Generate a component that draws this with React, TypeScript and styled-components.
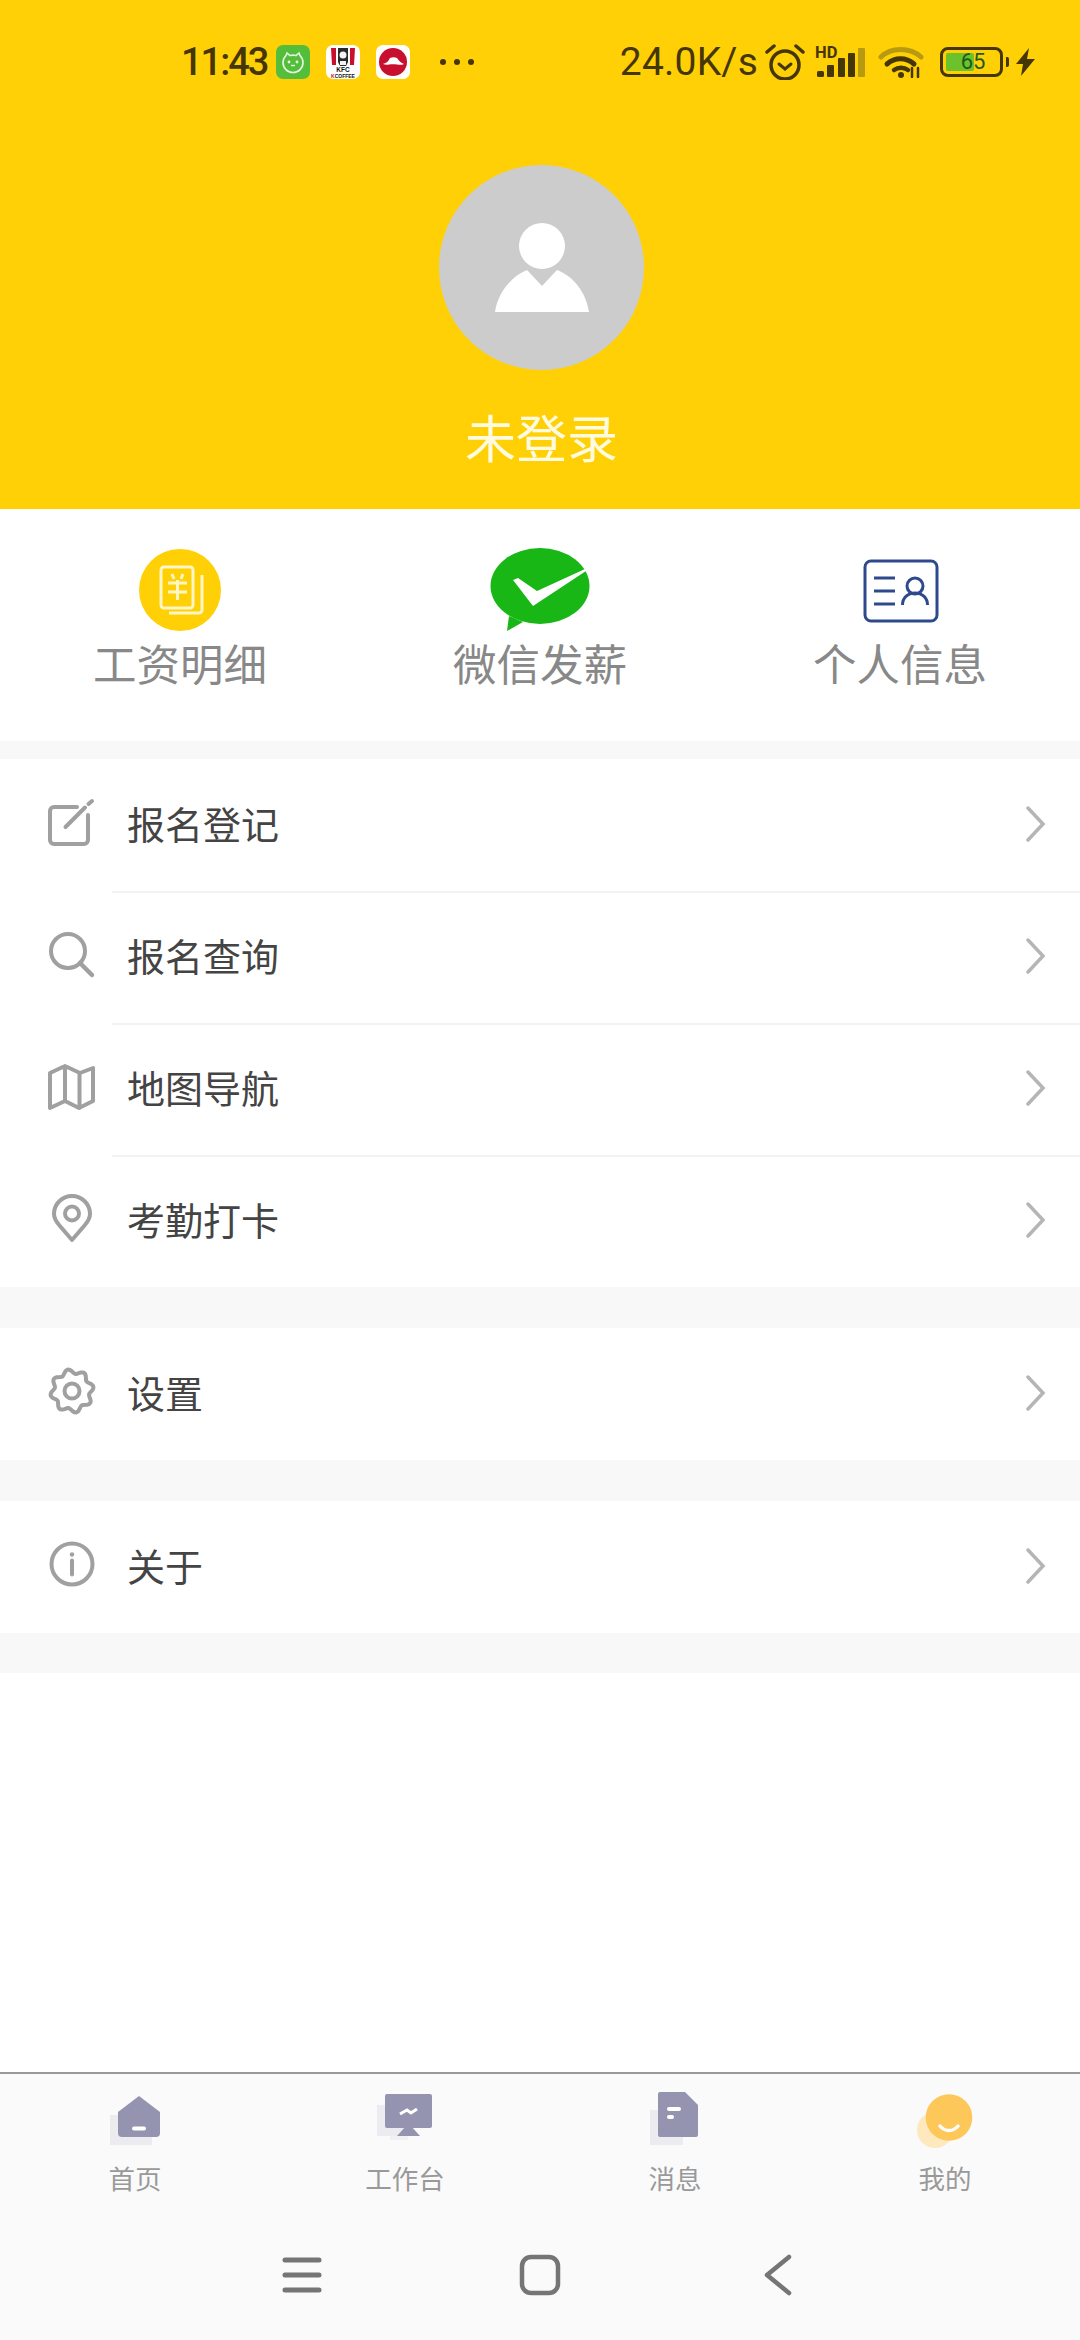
import { Fragment } from 'react'
import { createGlobalStyle, styled } from 'styled-components'

const GlobalStyle = createGlobalStyle`
  html, body {
    margin: 0;
    padding: 0;
    background: #fff;
    font-family: "Noto Sans CJK SC", "Noto Sans", sans-serif;
  }
  * {
    box-sizing: border-box;
  }
`

const gearPath = (() => {
  const points: string[] = []
  for (let i = 0; i < 96; i++) {
    const a = (i / 96) * Math.PI * 2
    const r = 19.6 + 2.2 * Math.cos(a * 8 + Math.PI / 2)
    points.push(`${(24 + r * Math.cos(a)).toFixed(2)} ${(22 + r * Math.sin(a)).toFixed(2)}`)
  }
  return `M${points.join('L')}Z`
})()

const menuGroups = [
  [
    { label: '报名登记', icon: 'edit' },
    { label: '报名查询', icon: 'search' },
    { label: '地图导航', icon: 'map' },
    { label: '考勤打卡', icon: 'pin' },
  ],
  [{ label: '设置', icon: 'gear' }],
  [{ label: '关于', icon: 'info' }],
]

const MenuIcon = ({ name }: { name: string }) => (
  <MenuSvg viewBox="0 0 48 48">
    {name === 'edit' && (
      <>
        <path d="M29 7H6a4 4 0 0 0-4 4v29a4 4 0 0 0 4 4h30a4 4 0 0 0 4-4V15" />
        <path d="M17.5 27 37 7.5M40.5 4l3.5-3" />
      </>
    )}
    {name === 'search' && (
      <>
        <circle cx="20" cy="19" r="17" />
        <path d="m32 31 12 12" strokeWidth="4.500" />
      </>
    )}
    {name === 'map' && (
      <path d="M2 9 17 2l15 7 13-5v33l-14 7-14-7-15 7ZM17 2v35M31.5 9v35" />
    )}
    {name === 'pin' && (
      <>
        <path d="M24 44 11.5 29.5C8 25.5 6 22 6 18a18 18 0 0 1 36 0c0 4-2 7.500-5.500 11.500Z" />
        <circle cx="24" cy="17.500" r="7" />
      </>
    )}
    {name === 'gear' && (
      <>
        <path d={gearPath} />
        <circle cx="24" cy="22" r="7.500" />
      </>
    )}
    {name === 'info' && (
      <>
        <circle cx="24" cy="22" r="20.500" />
        <path d="M24 18.500v14" />
        <circle className="dot" cx="24" cy="12.500" r="2.200" />
      </>
    )}
  </MenuSvg>
)

const Chevron = () => (
  <ChevronSvg viewBox="0 0 20 36">
    <path d="m2 2 15 16L2 34" />
  </ChevronSvg>
)

const tabs = [
  {
    label: '首页',
    icon: (
      <>
        <rect x="5" y="25" width="42" height="30" fill="#ebebf0" />
        <path d="M34 6 55 22v21a4 4 0 0 1-4 4H17a4 4 0 0 1-4-4V22Z" fill="#9494b0" />
        <rect x="27" y="36.500" width="14" height="4" rx="2" fill="#fff" />
      </>
    ),
  },
  {
    label: '工作台',
    icon: (
      <>
        <rect x="2" y="15" width="30" height="31" fill="#ebebf0" />
        <rect x="15" y="46" width="18" height="4" fill="#f1f1f4" />
        <rect x="10" y="4" width="47" height="34" rx="2" fill="#9494b0" />
        <path d="M31 36 22 46h23L36 36Z" fill="#9494b0" />
        <path d="m25 24 7-4 4 3 6-4" fill="none" stroke="#fff" strokeWidth="3" />
      </>
    ),
  },
  {
    label: '消息',
    icon: (
      <>
        <rect x="5" y="20" width="33" height="35" fill="#ebebf0" />
        <path d="M15 2h25l13 13v30a2 2 0 0 1-2 2H15a2 2 0 0 1-2-2V4a2 2 0 0 1 2-2Z" fill="#9494b0" />
        <rect x="22" y="17" width="14" height="4" rx="2" fill="#fff" />
        <rect x="22" y="25" width="7" height="4" rx="2" fill="#fff" />
      </>
    ),
  },
  {
    label: '我的',
    icon: (
      <>
        <circle cx="20" cy="40" r="18" fill="#fde9bd" />
        <circle cx="34" cy="27.500" r="23.300" fill="#fdc75a" />
        <path d="M25 36c5 6 13 6 18 0" fill="none" stroke="#fff" strokeWidth="3.500" strokeLinecap="round" />
      </>
    ),
  },
]

const App = () => {
  return (
    <Page>
      <GlobalStyle />
      <Header>
        <StatusBar>
          <Clock>11:43</Clock>
          <AppIcons>
            <svg width="34" height="34" viewBox="0 0 34 34">
              <rect width="34" height="34" rx="7" fill="#54be3c" />
              <path d="M10 10.500 11 8l3 2.500a11 11 0 0 1 6 0L23 8l1 2.500c2 2 3 4 3 7a10 10 0 0 1-20 0c0-3 1-5 3-7Z" fill="none" stroke="#e6f7df" strokeWidth="1.600" />
              <circle cx="13" cy="17" r="1.400" fill="#e6f7df" />
              <circle cx="21" cy="17" r="1.400" fill="#e6f7df" />
              <path d="M15 20.500h4" stroke="#e6f7df" strokeWidth="1.400" />
            </svg>
            <svg width="34" height="34" viewBox="0 0 34 34">
              <rect width="34" height="34" rx="7" fill="#fff" />
              <path d="M5 3h5v17H6ZM29 3h-5v17h4Z" fill="#c8102e" />
              <path d="M12 3h10v14l-2 4h-6l-2-4Z" fill="#2a2a2a" />
              <circle cx="17" cy="10" r="3.500" fill="#f4f4f4" />
              <path d="M14 16h6v4h-6Z" fill="#f4f4f4" />
              <KfcText x="17" y="26.500" fontSize="6.500" fill="#111">KFC</KfcText>
              <KfcText x="17" y="32.500" fontSize="5" fill="#111">
                <tspan fill="#c8102e">K</tspan>COFFEE
              </KfcText>
            </svg>
            <svg width="34" height="34" viewBox="0 0 34 34">
              <rect width="34" height="34" rx="7" fill="#fff" />
              <circle cx="17" cy="17" r="14" fill="#c8102e" />
              <path d="M7 19c3-1 5-2 7-6 2-1 5-1 7 0 2 3 4 5 7 6-2 1-5 1-7 .5-3-.5-5-.5-8 0-2 .300-4 .300-6-.5Z" fill="#fff" />
            </svg>
          </AppIcons>
          <Dots>
            <i />
            <i />
            <i />
          </Dots>
          <RightGroup>
            <Speed>24.0K/s</Speed>
            <svg width="40" height="36" viewBox="0 0 40 36" fill="none" stroke="#453605" strokeLinecap="round">
              <circle cx="20" cy="21" r="14" strokeWidth="3.500" />
              <path d="m14 20 6 5 6-5" strokeWidth="3" />
              <path d="M2 8l7-6M38 8l-7-6" strokeWidth="3.500" />
            </svg>
            <svg width="50" height="58" viewBox="0 -14 50 58">
              <HdText x="0" y="11" fontSize="16.500">HD</HdText>
              <rect x="2" y="24" width="7" height="6" rx="1.500" fill="#453605" />
              <rect x="12" y="18" width="7" height="12" rx="1" fill="#453605" />
              <rect x="23" y="11" width="7" height="19" rx="1" fill="#453605" />
              <rect x="33" y="6" width="7" height="24" rx="1" fill="#453605" />
              <rect x="43" y="1" width="7" height="29" rx="1" fill="#b89a10" />
            </svg>
            <svg width="46" height="32" viewBox="0 0 46 32" fill="none" strokeLinecap="round">
              <path d="M3 11C13 1 32 1 43 11" stroke="#b89a10" strokeWidth="5" />
              <path d="M9 18c8-7 19-7 27 0" stroke="#453605" strokeWidth="5" />
              <path d="M16 24c4-3 10-3 14 0" stroke="#453605" strokeWidth="4.500" />
              <circle cx="23" cy="29" r="3" fill="#453605" />
              <path d="M34 22v9M40 22v9" stroke="#453605" strokeWidth="2.500" />
            </svg>
            <Battery>
              <BatteryShell>
                <BatteryFill />
                <BatteryValue>65</BatteryValue>
              </BatteryShell>
              <BatteryNub />
            </Battery>
            <svg width="19" height="28" viewBox="0 0 19 28">
              <path d="M13 0 0 16h7L5 28l14-17h-8Z" fill="#453605" />
            </svg>
          </RightGroup>
        </StatusBar>
        <Avatar>
          <svg width="205" height="205" viewBox="0 0 205 205">
            <circle cx="103" cy="81" r="23" fill="#fff" />
            <path d="M56 147c3-20 17-36 32-42l15 16 15-16c16 6 29 22 32 42Z" fill="#fff" />
          </svg>
        </Avatar>
        <UserName>未登录</UserName>
      </Header>

      <Actions>
        <Action>
          <ActionIcon>
            <svg width="100" height="100" viewBox="0 0 100 100" fill="none" stroke="#fff6c8" strokeWidth="3">
              <circle cx="50" cy="50" r="41" fill="#ffd006" stroke="none" />
              <rect x="31" y="27" width="32" height="41" rx="3" />
              <path d="M39 73h30a3 3 0 0 0 3-3V35" />
              <path d="M38 43h19M38 52h19M47.500 40v20M42 34l2 5M53 34l-2 5" />
            </svg>
          </ActionIcon>
          <ActionLabel>工资明细</ActionLabel>
        </Action>
        <Action>
          <ActionIcon>
            <svg width="120" height="100" viewBox="0 0 120 100">
              <ellipse cx="60" cy="46" rx="49.500" ry="38" fill="#18b716" />
              <path d="M29 76 27 91l16-9Z" fill="#18b716" />
              <path d="M33 40l5-2 19 13 48-22c1 .500 1 1 1 2L53 66Z" fill="#fff" />
            </svg>
          </ActionIcon>
          <ActionLabel>微信发薪</ActionLabel>
        </Action>
        <Action>
          <ActionIcon>
            <svg width="90" height="80" viewBox="0 0 90 80" fill="none" stroke="#2f4a8c" strokeWidth="3">
              <rect x="10" y="11" width="72" height="60" rx="6" />
              <path d="M19 28h21M19 41h21M19 54h21" />
              <circle cx="60" cy="36" r="8" />
              <path d="M47.500 55c0-7 5-12 12.500-12s12.500 5 12.500 12" />
            </svg>
          </ActionIcon>
          <ActionLabel>个人信息</ActionLabel>
        </Action>
      </Actions>

      <Spacer $height={18} />
      {menuGroups.map((group, index) => (
        <Fragment key={index}>
          <MenuGroup>
            {group.map(item => (
              <MenuRow key={item.label}>
                <MenuIcon name={item.icon} />
                <MenuBody>
                  <MenuText>{item.label}</MenuText>
                  <Chevron />
                </MenuBody>
              </MenuRow>
            ))}
          </MenuGroup>
          <Spacer $height={index === 2 ? 40 : 41} />
        </Fragment>
      ))}

      <Filler />

      <TabBar>
        {tabs.map(tab => (
          <Tab key={tab.label}>
            <svg width="60" height="60" viewBox="0 0 60 60">
              {tab.icon}
            </svg>
            <TabLabel>{tab.label}</TabLabel>
          </Tab>
        ))}
      </TabBar>
      <NavBar>
        <NavSlot>
          <svg width="40" height="40" viewBox="0 0 40 40" fill="none" stroke="#757575" strokeWidth="5" strokeLinecap="round">
            <path d="M3 5h34M3 20h34M3 35h34" />
          </svg>
        </NavSlot>
        <NavSlot>
          <svg width="42" height="42" viewBox="0 0 42 42" fill="none" stroke="#757575" strokeWidth="4.500">
            <rect x="3" y="3" width="36" height="36" rx="9" />
          </svg>
        </NavSlot>
        <NavSlot>
          <svg width="28" height="42" viewBox="0 0 28 42" fill="none" stroke="#757575" strokeWidth="4.500" strokeLinecap="round" strokeLinejoin="round">
            <path d="M25 3 3 21l22 18" />
          </svg>
        </NavSlot>
      </NavBar>
    </Page>
  )
}

export default App

const Page = styled.div`
  width: 1080px;
  min-height: 2340px;
  display: flex;
  flex-direction: column;
  background: #fff;
`

const Header = styled.header`
  height: 509px;
  background: #ffd006;
  display: flex;
  flex-direction: column;
  align-items: center;
`

const StatusBar = styled.div`
  width: 100%;
  height: 124px;
  padding: 0 45px 0 181px;
  display: flex;
  align-items: center;
  color: #453605;
  font-family: Roboto, "Noto Sans", sans-serif;
`

const Clock = styled.span`
  font-size: 38px;
  font-weight: 500;
  letter-spacing: -2px;
  white-space: nowrap;
`

const AppIcons = styled.div`
  margin-left: 9px;
  display: flex;
  gap: 16px;

  svg {
    display: block;
  }
`

const KfcText = styled.text`
  font-family: "Liberation Sans", sans-serif;
  font-weight: 700;
  text-anchor: middle;
`

const HdText = styled.text`
  font-family: Roboto, sans-serif;
  font-weight: 700;
  fill: #453605;
`

const Dots = styled.div`
  margin-left: 30px;
  display: flex;
  gap: 8px;

  i {
    width: 6px;
    height: 6px;
    border-radius: 50%;
    background: #453605;
  }
`

const RightGroup = styled.div`
  margin-left: auto;
  display: flex;
  align-items: center;

  svg {
    display: block;
  }
  svg:nth-of-type(1) {
    margin-left: 7px;
  }
  svg:nth-of-type(2) {
    margin-left: 10px;
  }
  svg:nth-of-type(3) {
    margin-left: 13px;
  }
  svg:nth-of-type(4) {
    margin-left: 7px;
  }
`

const Speed = styled.span`
  font-size: 39px;
  min-width: 138px;
  white-space: nowrap;
  letter-spacing: 0.2px;
`

const Battery = styled.div`
  margin-left: 16px;
  display: flex;
  align-items: center;
  gap: 3px;
`

const BatteryShell = styled.div`
  position: relative;
  width: 63px;
  height: 30px;
  border: 3.5px solid #453605;
  border-radius: 8px;
  display: flex;
  align-items: center;
  justify-content: center;
`

const BatteryFill = styled.div`
  position: absolute;
  left: 3px;
  top: 3px;
  bottom: 3px;
  width: 28px;
  border-radius: 2px;
  background: #6cc22a;
`

const BatteryValue = styled.span`
  position: relative;
  font-size: 22px;
  line-height: 1;
  color: #1f5a1c;
  margin-left: 3px;
`

const BatteryNub = styled.div`
  width: 3px;
  height: 10px;
  border-radius: 0 2px 2px 0;
  background: #453605;
`

const Avatar = styled.div`
  margin: 41px 0 0 3px;
  width: 205px;
  height: 205px;
  border-radius: 50%;
  background: #cccccc;

  svg {
    display: block;
  }
`

const UserName = styled.div`
  margin: 31px 0 0 3px;
  font-size: 51px;
  line-height: 70px;
  color: #fffbe0;
`

const Actions = styled.section`
  height: 232px;
  padding-top: 31px;
  display: grid;
  grid-template-columns: repeat(3, 360px);
`

const Action = styled.div`
  display: flex;
  flex-direction: column;
  align-items: center;
`

const ActionIcon = styled.div`
  height: 100px;
  display: flex;
  align-items: center;
  justify-content: center;

  svg {
    display: block;
  }
`

const ActionLabel = styled.div`
  font-size: 43.5px;
  line-height: 46px;
  color: #888888;
`

const Spacer = styled.div<{ $height: number }>`
  height: ${props => props.$height}px;
  background: #f8f8f8;
`

const MenuGroup = styled.div`
  padding-top: 2px;
`

const MenuRow = styled.div`
  height: 132px;
  padding-left: 48px;
  display: flex;
  align-items: stretch;

  &:last-child {
    height: 130px;
  }
  &:last-child > div {
    border-bottom: none;
  }
`

const MenuSvg = styled.svg`
  flex: none;
  width: 48px;
  height: 48px;
  margin-top: 39px;
  overflow: visible;
  fill: none;
  stroke: #a0a0a0;
  stroke-width: 4;
  stroke-linecap: round;
  stroke-linejoin: round;

  .dot {
    fill: #a0a0a0;
    stroke: none;
  }
`

const MenuBody = styled.div`
  flex: 1;
  margin-left: 16px;
  padding: 0 34px 8px 15px;
  display: flex;
  align-items: center;
  justify-content: space-between;
  border-bottom: 2px solid #f2f2f2;
`

const MenuText = styled.span`
  font-size: 38px;
  color: #444444;
`

const ChevronSvg = styled.svg`
  width: 20px;
  height: 36px;
  margin-top: 4px;
  fill: none;
  stroke: #b5b5b5;
  stroke-width: 3.5;
  stroke-linecap: round;
`

const Filler = styled.div`
  flex: 1;
`

const TabBar = styled.nav`
  border-top: 2px solid #999999;
  padding-top: 16px;
  background: #fafafa;
  display: grid;
  grid-template-columns: repeat(4, 270px);
`

const Tab = styled.div`
  display: flex;
  flex-direction: column;
  align-items: center;
`

const TabLabel = styled.div`
  margin-top: 10px;
  font-size: 26.5px;
  line-height: 36px;
  color: #999999;
`

const NavBar = styled.div`
  height: 144px;
  padding-top: 14px;
  background: #fafafa;
  display: flex;
  align-items: center;
  justify-content: center;
`

const NavSlot = styled.div`
  width: 238px;
  display: flex;
  justify-content: center;

  svg {
    display: block;
  }
`
